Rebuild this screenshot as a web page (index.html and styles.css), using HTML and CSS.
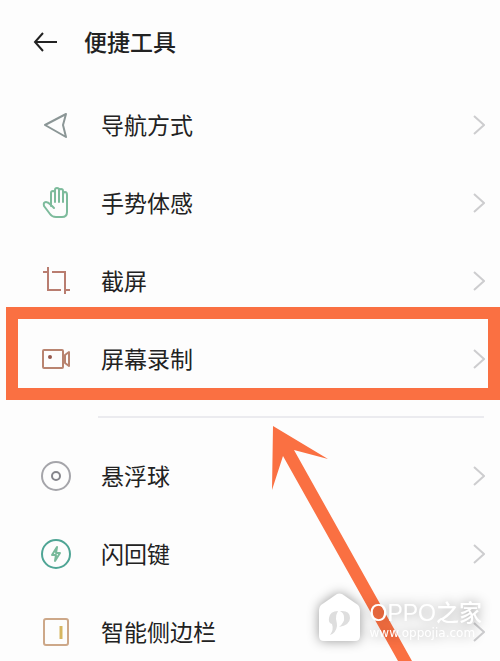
FILE: index.html
```html
<!DOCTYPE html>
<html lang="zh-CN">
<head>
    <meta charset="UTF-8">
    <meta name="viewport" content="width=device-width, initial-scale=1.0">
    <title>便捷工具</title>
    <link rel="stylesheet" href="styles.css">
</head>
<body>
    <div class="page">
        <header class="header">
            <button class="back-btn" type="button" aria-label="返回">
                <svg width="26" height="22" viewBox="0 0 26 22"><path d="M25 11H3M11 2L3 11L11 20" fill="none" stroke="#222" stroke-width="2"/></svg>
            </button>
            <h1>便捷工具</h1>
        </header>

        <nav class="list">
            <a class="item" href="#">
                <svg class="icon" viewBox="0 0 32 32"><path d="M26 5L5 16L26 28L23 16Z" fill="none" stroke="#8b9696" stroke-width="2" stroke-linejoin="round"/></svg>
                <span class="name">导航方式</span>
                <svg class="chevron" viewBox="0 0 12 20"><path d="M1 1L11 10L1 19"/></svg>
            </a>
            <a class="item" href="#">
                <svg class="icon" viewBox="0 0 32 32"><path d="M11 19V6Q11 4 13 4Q15 4 15 6V15M15 6V3Q15 1 17 1Q19 1 19 3V15M19 4Q19 2 21 2Q23 2 23 4V15M23 8Q23 5 25 5Q27 5 27 8V25Q27 30 22 30H16Q12 30 10 27L4 19Q3 15 6 15Q8 15 11 18L14 21" fill="none" stroke="#7dbb9c" stroke-width="2" stroke-linecap="round" stroke-linejoin="round"/></svg>
                <span class="name">手势体感</span>
                <svg class="chevron" viewBox="0 0 12 20"><path d="M1 1L11 10L1 19"/></svg>
            </a>
            <a class="item" href="#">
                <svg class="icon" viewBox="0 0 32 32"><path d="M3 7H9M8 2V25H21M24 25H30M12 7H25V29" fill="none" stroke="#b97d70" stroke-width="2"/></svg>
                <span class="name">截屏</span>
                <svg class="chevron" viewBox="0 0 12 20"><path d="M1 1L11 10L1 19"/></svg>
            </a>
            <a class="item marked" href="#">
                <svg class="icon" viewBox="0 0 32 32"><g fill="none" stroke="#b98470" stroke-width="2" stroke-linejoin="round"><rect x="3" y="7" width="20" height="18" rx="1"/><path d="M29 9V23L25 20V12Z"/></g><circle cx="10" cy="14" r="2" fill="#96594d"/></svg>
                <span class="name">屏幕录制</span>
                <svg class="chevron" viewBox="0 0 12 20"><path d="M1 1L11 10L1 19"/></svg>
            </a>
        </nav>

        <hr class="divider">

        <nav class="list">
            <a class="item" href="#">
                <svg class="icon" viewBox="0 0 32 32"><g fill="none" stroke-width="2"><circle cx="16" cy="16" r="14" stroke="#a5a5aa"/><circle cx="16" cy="16" r="4" stroke="#85858b"/></g></svg>
                <span class="name">悬浮球</span>
                <svg class="chevron" viewBox="0 0 12 20"><path d="M1 1L11 10L1 19"/></svg>
            </a>
            <a class="item" href="#">
                <svg class="icon" viewBox="0 0 32 32"><g fill="none" stroke-linejoin="round" stroke-linecap="round"><circle cx="16" cy="16" r="14" stroke="#4fa595" stroke-width="2"/><path d="M17 9L12 17H16L15 23L20 15H16Z" stroke="#78b99a" stroke-width="2"/></g></svg>
                <span class="name">闪回键</span>
                <svg class="chevron" viewBox="0 0 12 20"><path d="M1 1L11 10L1 19"/></svg>
            </a>
            <a class="item" href="#">
                <svg class="icon" viewBox="0 0 32 32"><rect x="4" y="3" width="24" height="26" rx="2" fill="none" stroke="#cda889" stroke-width="2"/><path d="M21 10V23" stroke="#d6b661" stroke-width="3"/></svg>
                <span class="name">智能侧边栏</span>
                <svg class="chevron" viewBox="0 0 12 20"><path d="M1 1L11 10L1 19"/></svg>
            </a>
        </nav>

        <!-- arrow pointing at the marked row -->
        <svg class="arrow" width="140" height="235" viewBox="0 0 140 235"><path d="M1 0L56 33L22 24L140 235H126L11 30L0 64Z" fill="#fa7042"/></svg>

        <div class="watermark">
            <svg class="logo" width="41" height="48" viewBox="0 0 41 48">
                <path d="M18 1Q20 0 23 1L39 12Q41 14 41 17V43Q41 48 36 48H5Q0 48 0 43V17Q0 14 2 12Z" fill="#fff"/>
                <path d="M10 25Q11 18 19 18Q17 21 17 26Q18 30 18 33Q17 40 11 42Q15 37 13 31Q9 30 10 25ZM21 18Q31 17 31 25Q31 32 20 34Q26 29 25 24Q25 20 21 18Z" fill="#dedede"/>
            </svg>
            <div class="brand">
                <span class="brand-name">OPPO之家</span>
                <span class="brand-url">www.oppojia.com</span>
            </div>
        </div>
    </div>
</body>
</html>
```
FILE: styles.css
```css
* { box-sizing: border-box; }
body {
    margin: 0;
    background-color: #fdfdfd;
    color: #222;
    font-family: "Noto Sans CJK SC", sans-serif;
}
.page { position: relative; height: 100vh; overflow: hidden; }

.header {
    display: flex;
    align-items: center;
    gap: 26px;
    height: 84px;
    padding-left: 32px;
}
.header h1 { margin: 0; padding-bottom: 2px; font-size: 23px; line-height: 32px; font-weight: 500; }
.back-btn { display: flex; padding: 0; border: none; background: none; cursor: pointer; }

.list { display: flex; flex-direction: column; padding-top: 2px; }
.item {
    position: relative;
    display: flex;
    align-items: center;
    height: 78px;
    padding: 0 15px 0 40px;
    color: inherit;
    text-decoration: none;
}
.icon { width: 32px; height: 32px; margin-right: 29px; }
.name { flex: 1; padding-bottom: 2px; font-size: 23px; line-height: 32px; }
.chevron { width: 12px; height: 20px; }
.chevron path { fill: none; stroke: #cdcdcf; stroke-width: 2; }

.marked::after {
    content: "";
    position: absolute;
    inset: -13px 0 -2px 6px;
    border: 12px solid #fa7042;
}

.divider { height: 2px; margin: 18px 16px 17px 98px; border: none; background-color: #ebebef; }

.arrow { position: absolute; left: 272px; top: 426px; }

.watermark {
    position: absolute;
    right: 18px;
    bottom: 20px;
    display: flex;
    align-items: flex-end;
    gap: 10px;
    color: #fff;
    filter: drop-shadow(0 0 6px rgba(0, 0, 0, 0.4));
}
.brand { display: flex; flex-direction: column; }
.brand-name { font-family: "Liberation Sans", "Noto Sans CJK SC", sans-serif; font-size: 23px; line-height: 24px; font-weight: 500; }
.brand-url { font-family: "DejaVu Sans", sans-serif; font-size: 12px; line-height: 16px; }
```
